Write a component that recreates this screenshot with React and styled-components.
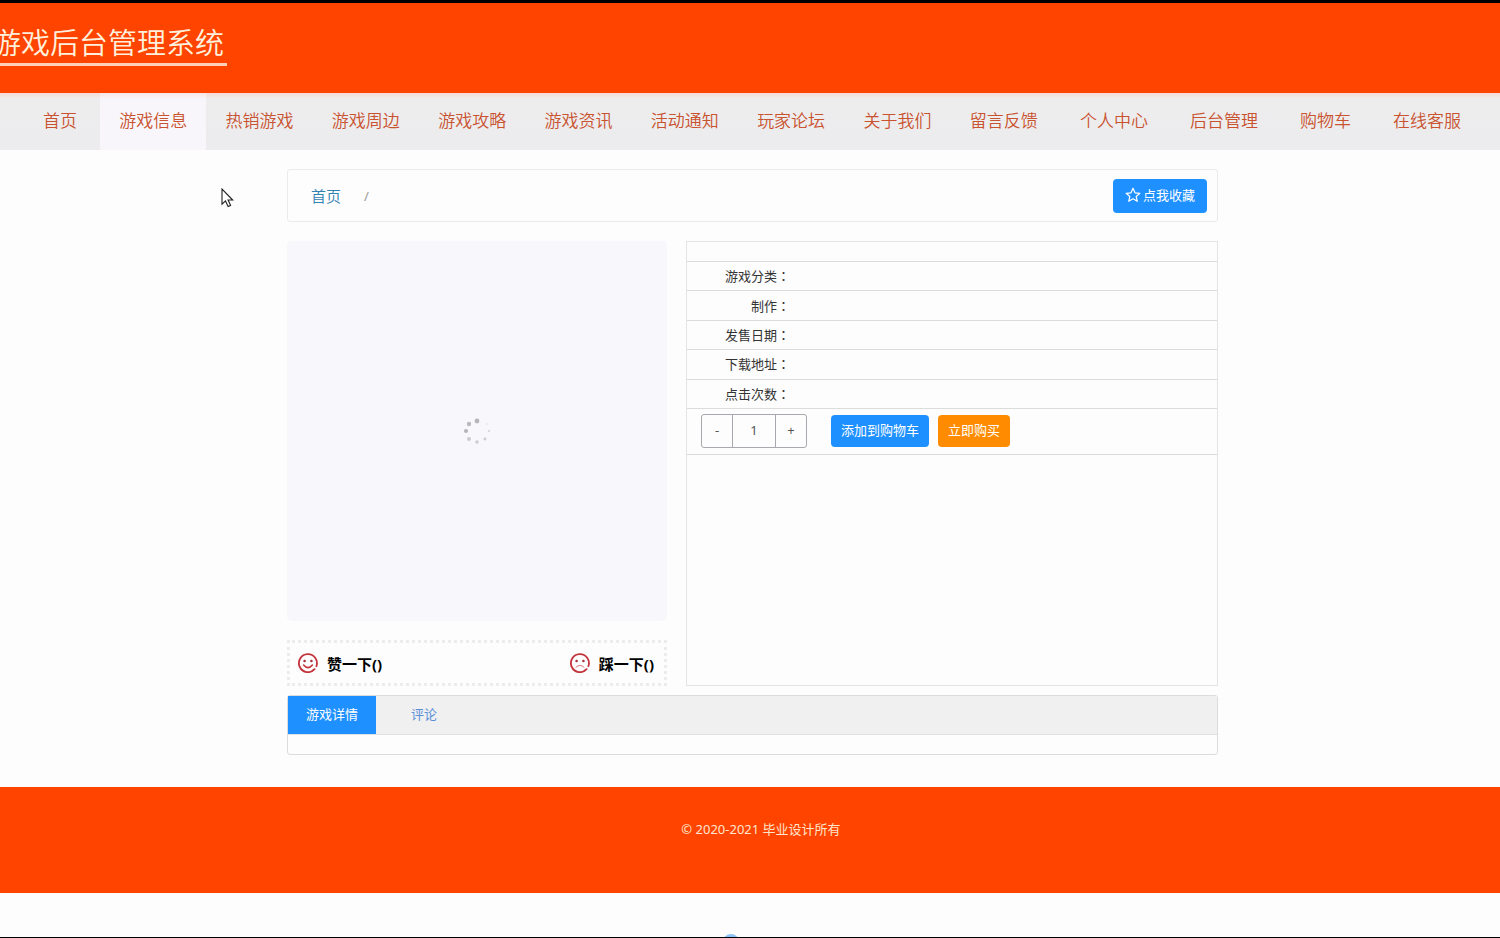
import React from "react";
import styled, { createGlobalStyle } from "styled-components";

const GlobalStyle = createGlobalStyle`
  * {
    box-sizing: border-box;
  }
  body {
    margin: 0;
    background: #fdfdfd;
    color: #333;
    font-family: "Noto Sans", "Noto Sans CJK SC", sans-serif;
    font-size: 13px;
  }
  button, input {
    font-family: inherit;
    font-size: inherit;
  }
  a {
    text-decoration: none;
  }
`;

const Page = styled.div`
  position: relative;
  display: flex;
  flex-direction: column;
  min-height: 100vh;
  border-top: 3px solid #000;
  border-bottom: 1px solid #000;
  overflow: hidden;
`;

const Header = styled.header`
  display: flex;
  align-items: flex-start;
  height: 90px;
  padding-top: 20px;
  background: #ff4400;
`;

const Title = styled.h1`
  margin: 0 0 0 -8px;
  padding-right: 3px;
  border-bottom: 3px solid #ffd0b8;
  color: #fff0dc;
  font-size: 29px;
  font-weight: 350;
  line-height: 40px;
  white-space: nowrap;
`;

const Nav = styled.nav`
  display: flex;
  gap: 4px;
  height: 57px;
  padding: 0 20px 0 24px;
  background: linear-gradient(#f6dcd6, #ededee 6px, #ececee);
`;

const NavGroup = styled.div`
  display: flex;
  flex: 1;
`;

const NavLink = styled.a`
  flex: ${props => props.$grow ? "1" : "none"};
  padding: 0 19px;
  background: ${props => props.$active ? "linear-gradient(#f8e6e4, #f8f6fb 6px)" : "none"};
  color: #c9522f;
  font-size: 17px;
  font-weight: 350;
  line-height: 56px;
  text-align: center;
  white-space: nowrap;
`;

const Main = styled.main`
  width: 100%;
  max-width: 936px;
  margin: 0 auto;
  padding: 19px 0 32px 5px;
`;

const Crumbs = styled.div`
  display: flex;
  align-items: center;
  height: 53px;
  padding: 0 10px 0 23px;
  border: 1px solid #ebebeb;
  border-radius: 3px;
`;

const CrumbLink = styled.a`
  color: #3080b0;
  font-size: 15px;
  font-weight: 350;
`;

const Slash = styled.span`
  flex: 1;
  padding-left: 23px;
  color: #999;
`;

const Button = styled.button`
  display: flex;
  align-items: center;
  justify-content: center;
  gap: 2px;
  height: ${props => props.$tall ? "34px" : "32px"};
  padding: 0 ${props => props.$tall ? "12px" : "10px"} 2px;
  border: 0;
  border-radius: 4px;
  background: ${props => props.$orange ? "#ff8c00" : "#1e90ff"};
  color: #fff;
  white-space: nowrap;
`;

const Columns = styled.div`
  display: grid;
  grid-template-columns: 380fr 532fr;
  gap: 19px;
  margin: 19px 0 9px;
`;

const Cover = styled.div`
  display: flex;
  align-items: center;
  justify-content: center;
  aspect-ratio: 1;
  border-radius: 5px;
  background: #f8f7fb;
`;

const Votes = styled.div`
  display: flex;
  justify-content: space-between;
  height: 46px;
  margin-top: 19px;
  padding: 0 10px 0 8px;
  border: 3px dotted #ececec;
`;

const Vote = styled.button`
  display: flex;
  align-items: center;
  gap: 9px;
  padding: 0;
  border: 0;
  background: none;
  color: #000;
  font-size: 15px;
  font-weight: 700;
`;

const Info = styled.section`
  border: 1px solid #e4e4e4;
`;

const Facts = styled.dl`
  display: grid;
  grid-auto-rows: 1fr;
  min-height: 147px;
  margin: 19px 0 0;
`;

const Fact = styled.div`
  display: flex;
  align-items: center;
  border-top: 1px solid #dcdcdc;
`;

const Label = styled.dt`
  width: 103px;
  color: #333;
  line-height: 28px;
  text-align: right;
`;

// the TC face centres the full-width colon
const Colon = styled.span`
  font-family: "Noto Sans CJK TC", sans-serif;
`;

const Value = styled.dd`
  margin: 0;
`;

const Actions = styled.div`
  display: flex;
  align-items: center;
  gap: 9px;
  height: 47px;
  padding: 0 0 2px 14px;
  border-top: 1px solid #dcdcdc;
  border-bottom: 1px solid #dcdcdc;
`;

const Stepper = styled.div`
  display: flex;
  height: 34px;
  margin-right: 15px;
  border: 1px solid #a8a8ae;
  border-radius: 3px;
`;

const Step = styled.button`
  width: 30px;
  padding: 0 0 2px;
  border: 0;
  background: none;
  color: #555;
`;

const Count = styled.input`
  width: 44px;
  padding: 0 0 2px;
  border: 1px solid #a8a8ae;
  border-width: 0 1px;
  background: none;
  color: #555;
  text-align: center;
`;

const Tabs = styled.section`
  border: 1px solid #dcdcdc;
  border-radius: 3px;
`;

const TabBar = styled.div`
  display: flex;
  gap: 17px;
  border-bottom: 1px solid #e0e0e0;
  background: #f0f0f0;
`;

const Tab = styled.button`
  height: 38px;
  padding: 0 18px 3px;
  border: 0;
  background: ${props => props.$active ? "#1e90ff" : "none"};
  color: ${props => props.$active ? "#fff" : "#5a8fd8"};
`;

const TabBody = styled.div`
  height: 19px;
`;

const Footer = styled.footer`
  height: 106px;
  padding: 32px 0 0 22px;
  background: #ff4400;
  color: #ffe6cc;
  line-height: 20px;
  text-align: center;
`;

const Bubble = styled.span`
  position: absolute;
  bottom: -13px;
  left: 48%;
  width: 16px;
  height: 16px;
  margin-left: 3px;
  border-radius: 50%;
  background: #8cc4fa;
`;

const Pointer = styled.svg`
  position: absolute;
  top: 185px;
  left: 221px;
`;

const categories = [
    "游戏信息", "热销游戏", "游戏周边", "游戏攻略", "游戏资讯",
    "活动通知", "玩家论坛", "关于我们", "留言反馈"
];
const account = ["个人中心", "后台管理", "购物车", "在线客服"];
const facts = ["游戏分类", "制作", "发售日期", "下载地址", "点击次数"];

// x, y, radius, opacity
const dots = [
    [14, 4, 2.4, 0.75],
    [6, 7, 2.2, 0.7],
    [3, 14, 2.1, 0.75],
    [6, 22, 2, 0.5],
    [14, 25, 1.7, 0.5],
    [22, 22, 1.4, 0.5],
    [26, 14, 1, 0.45],
    [24, 7, 0.8, 0.25]
];

const Spinner = () => (
    <svg width="28" height="28" viewBox="0 0 28 28" fill="#a0a0a4">
        {dots.map(([x, y, r, opacity]) => <circle key={`${x}-${y}`} cx={x} cy={y} r={r} opacity={opacity}/>)}
    </svg>
);

const Star = () => (
    <svg width="16" height="16" viewBox="0 0 16 16" fill="none" stroke="#fff" strokeWidth="1.2" strokeLinejoin="round">
        <path d="M8 1.3l2 4.5 4.9.5-3.7 3.2 1.1 4.8L8 11.8l-4.3 2.5 1.1-4.8L1.1 6.3 6 5.8z"/>
    </svg>
);

const Face = ({sad}) => (
    <svg width="20" height="20" viewBox="0 0 20 20" fill="none" stroke="#c4343c" strokeLinecap="round">
        <path d="M16.6 16.2A9 9 0 1 1 18.4 13.2" strokeWidth="1.8"/>
        <circle cx="6.6" cy="8" r="1.3" fill="#a8323a" stroke="none"/>
        <circle cx="13.4" cy="8" r="1.3" fill="#a8323a" stroke="none"/>
        {sad
            ? <path d="M6 14.2Q10 10.4 14 14.2" strokeWidth="1" stroke="#d8787c"/>
            : <path d="M5.6 12Q10 17.2 14.4 12" strokeWidth="1.6"/>}
    </svg>
);

const App = () => (
    <>
        <GlobalStyle/>
        <Page>
            <Header>
                <Title>游戏后台管理系统</Title>
            </Header>
            <Nav>
                <NavLink href="#home">首页</NavLink>
                <NavGroup>
                    {categories.map((name, index) => (
                        <NavLink key={name} href={`#${name}`} $grow $active={index === 0}>{name}</NavLink>
                    ))}
                </NavGroup>
                {account.map(name => <NavLink key={name} href={`#${name}`}>{name}</NavLink>)}
            </Nav>
            <Main>
                <Crumbs>
                    <CrumbLink href="#home">首页</CrumbLink>
                    <Slash>/</Slash>
                    <Button $tall><Star/>点我收藏</Button>
                </Crumbs>
                <Columns>
                    <div>
                        <Cover><Spinner/></Cover>
                        <Votes>
                            <Vote><Face/>赞一下()</Vote>
                            <Vote><Face sad/>踩一下()</Vote>
                        </Votes>
                    </div>
                    <Info>
                        <Facts>
                            {facts.map(name => (
                                <Fact key={name}>
                                    <Label>{name}<Colon>：</Colon></Label>
                                    <Value/>
                                </Fact>
                            ))}
                        </Facts>
                        <Actions>
                            <Stepper>
                                <Step>-</Step>
                                <Count aria-label="数量" defaultValue="1"/>
                                <Step>+</Step>
                            </Stepper>
                            <Button>添加到购物车</Button>
                            <Button $orange>立即购买</Button>
                        </Actions>
                    </Info>
                </Columns>
                <Tabs>
                    <TabBar role="tablist">
                        <Tab role="tab" aria-selected="true" $active>游戏详情</Tab>
                        <Tab role="tab" aria-selected="false">评论</Tab>
                    </TabBar>
                    <TabBody role="tabpanel"/>
                </Tabs>
            </Main>
            <Footer>© 2020-2021 毕业设计所有</Footer>
            <Bubble/>
            <Pointer width="13" height="20" viewBox="0 0 13 20" fill="#fff" stroke="#222" strokeWidth="1.1">
                <path d="M1 1v15.2l3.5-3.3 2.6 5.6 2.5-1.1-2.5-5.4h4.6z"/>
            </Pointer>
        </Page>
    </>
);

export default App;
